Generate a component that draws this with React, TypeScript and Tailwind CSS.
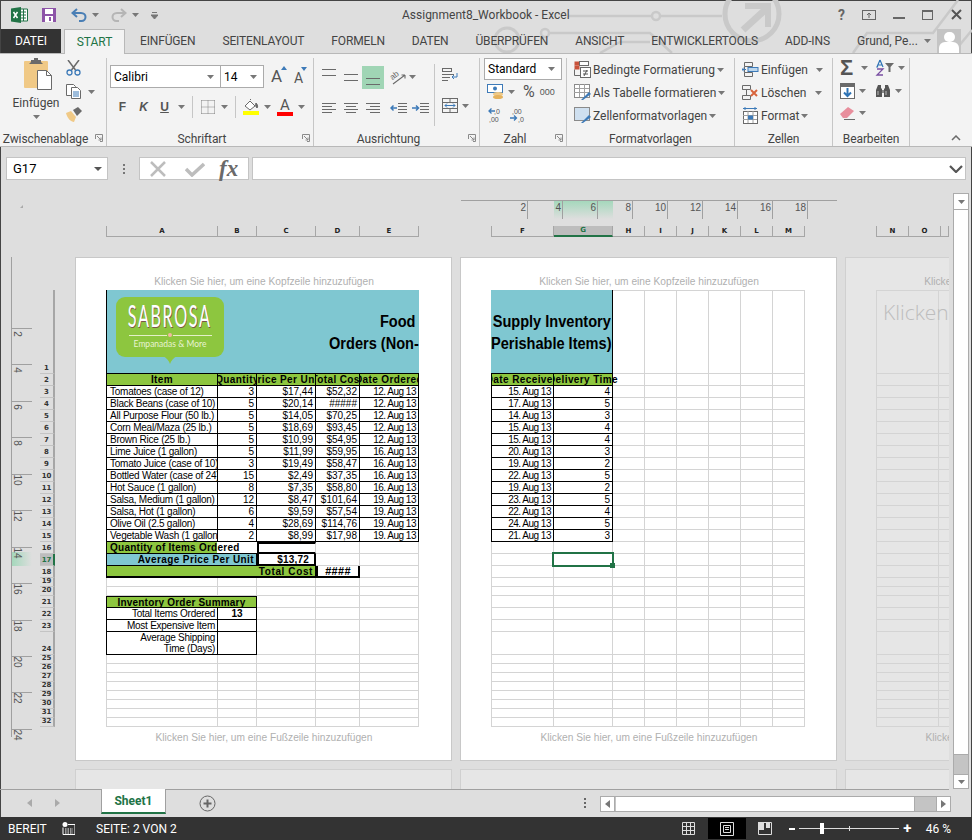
import React from 'react';

const sansUi = "font-['Roboto',sans-serif]";

const Caret = ({ className = '' }: { className?: string }) => (
  <svg width="7" height="4" viewBox="0 0 7 4" className={className}>
    <path d="M0 0h7L3.5 4z" fill="#777" />
  </svg>
);

// ---------- ribbon icons ----------
const Launcher = () => (
  <svg width="8" height="8" viewBox="0 0 8 8" className="shrink-0">
    <path d="M.5 5V.5H7.5V7.5H5" fill="none" stroke="#8a8a8a" />
    <path d="M2 2l4 4M6 3.5V6H3.5" fill="none" stroke="#8a8a8a" />
  </svg>
);

const AlignLines = ({ y }: { y: number[] }) => (
  <svg width="15" height="16" viewBox="0 0 15 16">
    {y.map((v, i) => (
      <path key={i} d={`M0 ${v}.5h14`} stroke="#6a6a6a" />
    ))}
  </svg>
);

const HAlign = ({ d }: { d: string }) => (
  <svg width="15" height="12" viewBox="0 0 15 12">
    <path d={d} stroke="#6a6a6a" fill="none" />
  </svg>
);

const Paste = () => (
  <svg width="30" height="32" viewBox="0 0 30 32">
    <rect x="1" y="3" width="24" height="27" rx="1" fill="#f0c986" />
    <path d="M8 4V2h3V0h4v2h3v2l2 2H6z" fill="#6a6a6a" />
    <path d="M14.500 12.500h9l5 5v14h-14z" fill="#fff" stroke="#6a6a6a" />
    <path d="M23.500 12.500v5h5" fill="none" stroke="#6a6a6a" />
  </svg>
);

const Scissors = () => (
  <svg width="15" height="16" viewBox="0 0 15 16">
    <path d="M2 0l7.500 10M13 0L5.500 10" stroke="#6a6a6a" strokeWidth="1.500" fill="none" />
    <circle cx="3.500" cy="12.500" r="2.500" fill="none" stroke="#3d7ab8" strokeWidth="1.300" />
    <circle cx="11.500" cy="12.500" r="2.500" fill="none" stroke="#3d7ab8" strokeWidth="1.300" />
  </svg>
);

const Copy = () => (
  <svg width="16" height="15" viewBox="0 0 16 15">
    <path d="M.5.5h7l2 2v9h-9z" fill="#fff" stroke="#6a6a6a" />
    <path d="M5.500 3.500h6l3 3v8h-9z" fill="#fff" stroke="#6a6a6a" />
    <path d="M7 8h6M7 10h6M7 12h6" stroke="#3d7ab8" />
  </svg>
);

const Painter = () => (
  <svg width="17" height="15" viewBox="0 0 17 15">
    <path d="M0 6l5-2 5 6-2 5C5 15 1 11 0 6z" fill="#f0c986" />
    <path d="M7 3l5-3 4 4-5 5z" fill="#6a6a6a" />
  </svg>
);

const Borders = () => (
  <svg width="14" height="14" viewBox="0 0 14 14">
    <path d="M.5.5h13M.5 7h13M.5 13.500h13M.5.5v13M7 .5v13M13.500.5v13" stroke="#808080" strokeDasharray="1 1" fill="none" />
  </svg>
);

const FillColor = () => (
  <svg width="16" height="16" viewBox="0 0 16 16">
    <path d="M2 7l5-5 5 5-5 4z" fill="#fff" stroke="#6a6a6a" />
    <path d="M7 1l1-1M13 4c2 2 2 4 1 5-1-1-2-3-1-5z" stroke="#6a6a6a" fill="#6a6a6a" />
    <rect y="12" width="16" height="4" fill="#ffff00" />
  </svg>
);

const Orient = () => (
  <svg width="16" height="16" viewBox="0 0 16 16">
    <text x="1" y="9" fontSize="8" fill="#666" transform="rotate(-40 5 8)" fontFamily="Liberation Sans">
      ab
    </text>
    <path d="M3 15L15 6M15 6h-3.500M15 6v3.500" stroke="#6a6a6a" fill="none" strokeWidth="1.100" />
  </svg>
);

const Wrap = () => (
  <svg width="16" height="15" viewBox="0 0 16 15">
    <rect x=".5" y=".5" width="9" height="3" fill="none" stroke="#6a6a6a" />
    <path d="M0 6.500h12M0 9.500h8M0 12.500h6" stroke="#6a6a6a" />
    <path d="M15 5v4h-5M12 7l-2 2 2 2" stroke="#3d7ab8" fill="none" />
  </svg>
);

const Merge = () => (
  <svg width="16" height="15" viewBox="0 0 16 15">
    <rect x=".5" y=".5" width="15" height="14" fill="none" stroke="#6a6a6a" />
    <path d="M0 4.500h16M0 10.500h16M8 .5v4M8 10.500v4" stroke="#6a6a6a" />
    <path d="M3 7.500h10M5 5.500l-2 2 2 2M11 5.500l2 2-2 2" stroke="#3d7ab8" fill="none" />
  </svg>
);

const IndentIcon = ({ flip = false }: { flip?: boolean }) => (
  <svg width="17" height="12" viewBox="0 0 17 12">
    <path d="M8 1.500h9M8 4.500h9M8 7.500h9M8 10.500h9" stroke="#6a6a6a" />
    <path
      d={flip ? 'M0 6h6M4 3.500L6.500 6 4 8.500' : 'M7 6H1M3.500 3.500L1 6l2.500 2.500'}
      stroke="#3d7ab8"
      strokeWidth="1.500"
      fill="none"
    />
  </svg>
);

const Currency = () => (
  <svg width="17" height="16" viewBox="0 0 17 16">
    <rect x=".5" y=".5" width="15" height="8" fill="#fff" stroke="#3d7ab8" />
    <circle cx="8" cy="4.500" r="2" fill="#3d7ab8" />
    <ellipse cx="11" cy="10" rx="5" ry="2" fill="#f0c986" />
    <ellipse cx="11" cy="13" rx="5" ry="2" fill="#e5b25d" />
  </svg>
);

const Decimal = ({ flip = false }: { flip?: boolean }) => (
  <svg width="15" height="16" viewBox="0 0 15 16">
    <path
      d={flip ? 'M0 11h6M4 8.500L6.500 11 4 13.500' : 'M7 4H1M3.500 1.500L1 4l2.500 2.500'}
      stroke="#3d7ab8"
      strokeWidth="1.300"
      fill="none"
    />
    <text x={flip ? '2' : '6'} y="6.500" fontSize="7" fill="#555" fontFamily="Liberation Sans">
      {flip ? ',00' : ',0'}
    </text>
    <text x={flip ? '8' : '1'} y="14.500" fontSize="7" fill="#555" fontFamily="Liberation Sans">
      {flip ? ',0' : ',00'}
    </text>
  </svg>
);

const CondFormat = () => (
  <svg width="17" height="17" viewBox="0 0 17 17">
    <rect x=".5" y=".5" width="5" height="4" fill="#c8523a" />
    <rect x="5.500" y=".5" width="9" height="4" fill="#fff" stroke="#6a6a6a" />
    <rect x=".5" y="4.500" width="5" height="4" fill="#c8523a" />
    <path d="M.5 8.500v6h7" fill="none" stroke="#6a6a6a" />
    <rect x="6.500" y="6.500" width="10" height="10" fill="#fff" stroke="#6a6a6a" />
    <path d="M9 10h5M9 13h5M10 15l3-6" stroke="#555" />
  </svg>
);

const TableFormat = ({ lines = true }: { lines?: boolean }) => (
  <svg width="17" height="17" viewBox="0 0 17 17">
    <rect x=".5" y=".5" width="15" height="13" fill={lines ? '#fff' : '#cfe0f0'} stroke="#8a8a8a" />
    {lines && <path d="M0 4.500h15M0 8.500h15M5.500 0v13M10.500 0v13" stroke="#a0a0a0" />}
    <path d="M7 16l8-8 2 2-8 6z" fill="#3d7ab8" />
  </svg>
);

const CellInsert = () => (
  <svg width="17" height="16" viewBox="0 0 17 16">
    <path d="M2.500.5h8v4h-8zM2.500 10.500h8v4h-8zM2.500 4.500v6" fill="none" stroke="#6a6a6a" />
    <path d="M0 7.500h4M2 5.500l-2 2 2 2" stroke="#3d7ab8" fill="none" />
    <rect x="6" y="5.500" width="10" height="4" fill="#bcd6ec" stroke="#3d7ab8" />
  </svg>
);

const CellDelete = () => (
  <svg width="17" height="16" viewBox="0 0 17 16">
    <path d="M.5.5h8v4h-8zM.5 10.500h8v4h-8zM.5 4.500h4v6" fill="none" stroke="#6a6a6a" />
    <path d="M9 5l6 6M15 5l-6 6" stroke="#d8643c" strokeWidth="2" />
  </svg>
);

const CellFormat = () => (
  <svg width="17" height="17" viewBox="0 0 17 17">
    <path d="M1 1.500h14M3 0v3M13 0v3" stroke="#3d7ab8" />
    <rect x="1.500" y="4.500" width="14" height="12" fill="#fff" stroke="#6a6a6a" />
    <path d="M1 8.500h14M1 12.500h14M6 4v12M11 4v12" stroke="#a0a0a0" />
    <rect x="6" y="8.500" width="5" height="4" fill="#3d7ab8" />
  </svg>
);

const FillDown = () => (
  <svg width="15" height="16" viewBox="0 0 15 16">
    <rect x=".5" y=".5" width="14" height="15" fill="#fff" stroke="#6a6a6a" />
    <rect x="1" y="1" width="13" height="3" fill="#6a6a6a" />
    <path d="M7.500 5v8M4 9.500l3.500 3.500L11 9.500" stroke="#2f74b5" strokeWidth="2" fill="none" />
  </svg>
);

const Binoculars = () => (
  <svg width="16" height="14" viewBox="0 0 16 14">
    <path d="M3 1h3v3l1 1v8H1V6zM13 1h-3v3L9 5v8h6V6z" fill="#555" />
    <path d="M7 6h2v3H7z" fill="#888" />
    <path d="M3 7v4M11 7v4" stroke="#bbb" />
  </svg>
);

const Eraser = () => (
  <svg width="15" height="14" viewBox="0 0 15 14">
    <path d="M0 8l8-7 6 4-7 7H3z" fill="#e88e9c" />
    <path d="M4 13.500h11" stroke="#6a6a6a" />
  </svg>
);

const SortIcon = () => (
  <svg width="20" height="16" viewBox="0 0 20 16" className="overflow-visible">
    <path d="M4 0L1 7h1.200M4 0l3 7M2.500 5h3" stroke="#2f74b5" fill="none" strokeWidth="1.200" />
    <path d="M1 9h6l-6 6h6" stroke="#7a4fa3" fill="none" strokeWidth="1.300" />
    <path d="M9 3h9l-3.500 4v5h-2V7z" fill="#6a6a6a" />
  </svg>
);

// ---------- title bar ----------
const ExcelLogo = () => (
  <svg width="17" height="16" viewBox="0 0 17 16">
    <path d="M7 2h9.500v12H7z" fill="#fff" stroke="#217346" />
    <path d="M10 5h5M10 8h5M10 11h5M12.500 2v12" stroke="#217346" />
    <path d="M0 1.500L10 0v16L0 14.500z" fill="#217346" />
    <path d="M2.500 5l4 6M6.500 5l-4 6" stroke="#fff" strokeWidth="1.500" />
  </svg>
);

const SaveIcon = () => (
  <svg width="14" height="14" viewBox="0 0 14 14">
    <rect width="14" height="14" fill="#8d54a8" />
    <rect x="3" y="1" width="8" height="5" fill="#fff" />
    <rect x="3" y="8" width="8" height="6" fill="#fff" />
    <rect x="7" y="9" width="2" height="4" fill="#8d54a8" />
  </svg>
);

const UndoIcon = ({ color }: { color: string }) => (
  <svg width="16" height="14" viewBox="0 0 16 14">
    <path d="M6 1L1.500 5 6 9" stroke={color} strokeWidth="2" fill="none" />
    <path d="M2 5h8c3 0 4.500 2 4.500 4s-1.500 4-4 4H8" stroke={color} strokeWidth="2" fill="none" />
  </svg>
);

const Watermark = () => (
  <svg
    width="482"
    height="54"
    viewBox="0 0 482 54"
    className="absolute right-0 top-0 pointer-events-none"
    fill="none"
    stroke="#c9c9c9"
    strokeWidth="2.500"
  >
    <circle cx="262" cy="14" r="27" strokeWidth="5" />
    <path d="M253 30L276 9" strokeWidth="7" />
    <path d="M255 6h23v21" strokeWidth="6" />
    <path d="M78 16h154" />
    <circle cx="166" cy="16" r="4" fill="#dedede" />
    <path d="M59 33h101l22 20" />
    <circle cx="55" cy="33" r="4" fill="#dedede" />
    <circle cx="17" cy="40" r="12" strokeWidth="3" />
    <path d="M110 53l20-11h30" />
    <path d="M363 53l14-20h66l19-25 6-8M463 53l19-23" />
  </svg>
);

// ---------- ribbon ----------
const Group = ({
  label,
  width,
  launcher,
  children,
}: {
  label: string;
  width: number;
  launcher?: boolean;
  children: React.ReactNode;
}) => (
  <div className="flex flex-col border-r border-[#c6c6c6] shrink-0" style={{ width }}>
    <div className="h-[74px]">{children}</div>
    <div className={`h-[10px] flex items-center relative text-[12px] text-[#444] ${launcher ? 'pr-[16px]' : ''}`}>
      <span className="flex-1 text-center leading-[14px] whitespace-nowrap translate-y-[2px] tracking-[-0.1px]">{label}</span>
      {launcher && (
        <span className="absolute right-[3px] top-[2px]">
          <Launcher />
        </span>
      )}
    </div>
  </div>
);

const StyleRow = ({ icon, label, caretGap = 2 }: { icon: React.ReactNode; label: string; caretGap?: number }) => (
  <div className="flex items-center h-[23px]">
    <span className="w-[19px] shrink-0 flex">{icon}</span>
    <span className="text-[12px] text-[#444] whitespace-nowrap">{label}</span>
    <span className="flex" style={{ marginLeft: caretGap }}>
      <Caret />
    </span>
  </div>
);

const Ribbon = () => (
  <div className="h-[93px] bg-[#f3f3f3] border-b border-[#b8b8b8] flex pt-[4px] pl-[1px] relative">
    <Group label="Zwischenablage" width={106} launcher>
      <div className="flex pl-[10px]">
        <div className="w-[50px] flex flex-col items-center">
          <span className="flex ml-[4px]">
            <Paste />
          </span>
          <span className="text-[12px] text-[#444] mt-[5px] leading-[16px]">Einfügen</span>
          <Caret className="mt-[4px]" />
        </div>
        <div className="flex flex-col ml-[5px] gap-[8px] pt-[2px]">
          <span className="flex">
            <Scissors />
          </span>
          <span className="flex items-center gap-[3px]">
            <Copy />
            <Caret className="ml-[3px]" />
          </span>
          <span className="flex">
            <Painter />
          </span>
        </div>
      </div>
    </Group>

    <Group label="Schriftart" width={207} launcher>
      <div className="flex items-center mt-[7px] pl-[3px]">
        <div className="w-[111px] h-[23px] bg-white border border-[#ababab] flex items-center justify-between px-[3px] text-[12px] text-black">
          Calibri
          <Caret className="mr-[3px]" />
        </div>
        <div className="w-[43px] h-[23px] bg-white border border-l-0 border-[#ababab] flex items-center justify-between px-[3px] text-[12px] text-black">
          14
          <Caret className="mr-[3px]" />
        </div>
        <div className="relative ml-[7px] text-[17px] text-[#555] leading-none w-[16px]">
          A
          <span className="absolute right-0 top-[-2px] w-0 h-0 border-x-[3px] border-x-transparent border-b-[4px] border-b-[#3d7ab8]" />
        </div>
        <div className="relative ml-[7px] text-[14px] text-[#555] leading-none w-[12px] mt-[2px]">
          A
          <span className="absolute right-[-1px] top-[-4px] w-0 h-0 border-x-[3px] border-x-transparent border-t-[4px] border-t-[#3d7ab8]" />
        </div>
      </div>
      <div className="flex items-center mt-[8px] pl-[5px] h-[22px] text-[12px] text-[#555]">
        <span className="w-[21px] font-bold font-['Liberation_Sans',sans-serif] text-center">F</span>
        <span className="w-[21px] font-bold italic font-['Liberation_Sans',sans-serif] text-center">K</span>
        <span className="w-[21px] font-bold underline font-['Liberation_Sans',sans-serif] text-center">U</span>
        <Caret className="ml-[3px]" />
        <span className="h-[22px] border-l border-[#c6c6c6] ml-[7px]" />
        <span className="ml-[8px] flex">
          <Borders />
        </span>
        <Caret className="ml-[6px]" />
        <span className="h-[22px] border-l border-[#c6c6c6] ml-[7px]" />
        <span className="ml-[7px] flex">
          <FillColor />
        </span>
        <Caret className="ml-[5px]" />
        <span className="ml-[6px] relative flex flex-col items-center w-[16px] text-[15px] leading-[14px]">
          A<span className="w-[16px] h-[4px] bg-[#ff0000]" />
        </span>
        <Caret className="ml-[5px]" />
      </div>
    </Group>

    <Group label="Ausrichtung" width={166} launcher>
      <div className="flex h-full">
        <div className="w-[121px] pl-[8px] border-r border-[#c6c6c6] h-[62px] mt-[6px]">
          <div className="flex items-center h-[24px] mt-[1px]">
            <span className="w-[22px] flex">
              <AlignLines y={[0, 6]} />
            </span>
            <span className="w-[18px] flex">
              <AlignLines y={[5, 11]} />
            </span>
            <span className="w-[22px] h-[23px] bg-[#a0d5b5] flex items-center justify-center">
              <AlignLines y={[9, 15]} />
            </span>
            <span className="ml-[6px] flex">
              <Orient />
            </span>
            <Caret className="ml-[3px]" />
          </div>
          <div className="flex items-center h-[22px] mt-[8px]">
            <span className="w-[22px] flex">
              <HAlign d="M0 1.500h14M0 4.500h10M0 7.500h14M0 10.500h10" />
            </span>
            <span className="w-[22px] flex">
              <HAlign d="M0 1.500h14M2 4.500h10M0 7.500h14M2 10.500h10" />
            </span>
            <span className="w-[24px] flex">
              <HAlign d="M0 1.500h14M4 4.500h10M0 7.500h14M4 10.500h10" />
            </span>
            <span className="w-[22px] flex">
              <IndentIcon />
            </span>
            <span className="flex">
              <IndentIcon flip />
            </span>
          </div>
        </div>
        <div className="pl-[7px] pt-[10px] flex flex-col gap-[15px]">
          <span className="flex">
            <Wrap />
          </span>
          <span className="flex items-center gap-[4px]">
            <Merge />
            <Caret />
          </span>
        </div>
      </div>
    </Group>

    <Group label="Zahl" width={87} launcher>
      <div className="pl-[4px]">
        <div className="w-[78px] h-[22px] bg-white border border-[#ababab] flex items-center justify-between px-[3px] text-[12px] text-black">
          Standard
          <Caret className="mr-[3px]" />
        </div>
        <div className="flex items-center h-[18px] mt-[3px] pl-[3px]">
          <Currency />
          <Caret className="ml-[4px]" />
          <span className="ml-[8px] text-[16px] text-[#555] leading-none">%</span>
          <span className="ml-[5px] text-[9px] text-[#555] leading-none font-['Liberation_Sans',sans-serif]">000</span>
        </div>
        <div className="flex items-center h-[16px] mt-[6px] pl-[4px] gap-[7px]">
          <Decimal />
          <Decimal flip />
        </div>
      </div>
    </Group>

    <Group label="Formatvorlagen" width={168}>
      <div className="pl-[7px]">
        <StyleRow icon={<CondFormat />} label="Bedingte Formatierung" />
        <StyleRow icon={<TableFormat />} label="Als Tabelle formatieren" />
        <StyleRow icon={<TableFormat lines={false} />} label="Zellenformatvorlagen" />
      </div>
    </Group>

    <Group label="Zellen" width={98}>
      <div className="pl-[7px]">
        <StyleRow icon={<CellInsert />} label="Einfügen" caretGap={8} />
        <StyleRow icon={<CellDelete />} label="Löschen" caretGap={9} />
        <StyleRow icon={<CellFormat />} label="Format" caretGap={2} />
      </div>
    </Group>

    <Group label="Bearbeiten" width={77}>
      <div className="pl-[7px] pt-[1px] flex flex-col gap-[7px]">
        <div className="flex items-center h-[17px]">
          <span className="w-[17px] text-[22px] font-bold leading-[17px] text-[#555] font-['Liberation_Sans',sans-serif]">Σ</span>
          <Caret className="ml-[4px]" />
          <span className="ml-[8px] flex">
            <SortIcon />
          </span>
          <Caret className="ml-[2px]" />
        </div>
        <div className="flex items-center h-[16px]">
          <FillDown />
          <Caret className="ml-[4px]" />
          <span className="ml-[9px] flex">
            <Binoculars />
          </span>
          <Caret className="ml-[4px]" />
        </div>
        <div className="flex items-center h-[14px]">
          <Eraser />
          <Caret className="ml-[4px]" />
        </div>
      </div>
    </Group>

    <svg width="10" height="6" viewBox="0 0 10 6" className="absolute right-[11px] bottom-[5px]">
      <path d="M1 5l4-4 4 4" fill="none" stroke="#6a6a6a" strokeWidth="1.500" />
    </svg>
  </div>
);

// ---------- sheet ----------
const Cell = ({ className = '', children }: { className?: string; children?: React.ReactNode }) => (
  <div
    className={`flex items-center min-w-0 whitespace-nowrap overflow-hidden text-[10px] leading-[11px] text-black border-r border-b ${className}`}
  >
    {children}
  </div>
);

const gray = 'border-[#d4d4d4]';
const blk = 'border-black';
const num = 'justify-end pr-[2px]';
const label = 'tracking-[-0.25px]';
const date = 'tracking-[-0.5px]';
const head = 'justify-center font-bold tracking-[0.4px] bg-[#8dc63f] border-black';

const rowTemplate = 'grid-rows-[84px_repeat(17,12px)_9px_9px_12px_12px_12px_23px_repeat(8,9px)]';

const items: string[][] = [
  ['Tomatoes (case of 12)', '3', '$17,44', '$52,32', '12. Aug 13'],
  ['Black Beans (case of 10)', '5', '$20,14', '#####', '12. Aug 13'],
  ['All Purpose Flour (50 lb.)', '5', '$14,05', '$70,25', '12. Aug 13'],
  ['Corn Meal/Maza (25 lb.)', '5', '$18,69', '$93,45', '12. Aug 13'],
  ['Brown Rice (25 lb.)', '5', '$10,99', '$54,95', '12. Aug 13'],
  ['Lime Juice (1 gallon)', '5', '$11,99', '$59,95', '16. Aug 13'],
  ['Tomato Juice (case of 10)', '3', '$19,49', '$58,47', '16. Aug 13'],
  ['Bottled Water (case of 24)', '15', '$2,49', '$37,35', '16. Aug 13'],
  ['Hot Sauce (1 gallon)', '8', '$7,35', '$58,80', '16. Aug 13'],
  ['Salsa, Medium (1 gallon)', '12', '$8,47', '$101,64', '19. Aug 13'],
  ['Salsa, Hot (1 gallon)', '6', '$9,59', '$57,54', '19. Aug 13'],
  ['Olive Oil (2.5 gallon)', '4', '$28,69', '$114,76', '19. Aug 13'],
  ['Vegetable Wash (1 gallon)', '2', '$8,99', '$17,98', '19. Aug 13'],
];

const received: [string, string][] = [
  ['15. Aug 13', '4'],
  ['17. Aug 13', '5'],
  ['14. Aug 13', '3'],
  ['15. Aug 13', '4'],
  ['15. Aug 13', '4'],
  ['20. Aug 13', '3'],
  ['19. Aug 13', '2'],
  ['22. Aug 13', '5'],
  ['19. Aug 13', '2'],
  ['23. Aug 13', '5'],
  ['22. Aug 13', '4'],
  ['24. Aug 13', '5'],
  ['21. Aug 13', '3'],
];

const range = (n: number) => Array.from({ length: n }, (_, i) => i);

const Logo = () => (
  <div className="absolute left-[9px] top-[7px] w-[108px] h-[60px] rounded-[9px] bg-[#8dc63f] flex flex-col items-center text-white">
    <span className="block h-[30px] mt-[3px] text-[30px] leading-[30px] font-normal font-['Lato',sans-serif] tracking-[3px] scale-x-[0.54] [text-shadow:1px_1px_0_#7a5648]">
      SABROSA
    </span>
    <div className="w-[83px] mt-[3px] flex items-center">
      <span className="flex-1 h-px bg-[#e4f0c8]" />
      <span className="w-[4px] h-[4px] rounded-full bg-[#f2b9a0] mx-[1px]" />
      <span className="flex-1 h-px bg-[#e4f0c8]" />
    </div>
    <span className="text-[8.5px] leading-[10px] mt-[2px] font-['Lato',sans-serif] text-[#e8f3d2]">Empanadas &amp; More</span>
    <svg width="14" height="8" viewBox="0 0 14 8" className="absolute left-[47px] top-[59px]">
      <path d="M0 0h14C10 2 8 5 7 8 6 5 4 2 0 0z" fill="#8dc63f" />
    </svg>
  </div>
);

const PageOneGrid = () => (
  <div className={`grid grid-cols-[112px_39px_59px_44px_59px] ${rowTemplate}`}>
    <div className="col-span-5 relative bg-[#7fc7d1] border-l border-b border-black overflow-hidden whitespace-nowrap">
      <Logo />
      <div className="absolute right-0 top-[21px] w-[230px] h-[44px] flex flex-col text-[16px] leading-[22px] font-bold text-black font-['Liberation_Sans',sans-serif] overflow-hidden">
        <span className="self-end pr-[4px] scale-x-[0.91] origin-right">Food</span>
        <span className="pl-[140px] scale-x-[0.91] origin-[140px_50%]">Orders (Non-</span>
      </div>
    </div>
    <Cell className={`${head} border-l`}>Item</Cell>
    <Cell className={head}>Quantity</Cell>
    <Cell className={head}>Price Per Unit</Cell>
    <Cell className={head}>Total Cost</Cell>
    <Cell className={head}>Date Ordered</Cell>
    {items.map((r) => (
      <React.Fragment key={r[0]}>
        <Cell className={`${blk} border-l pl-[3px] ${label}`}>{r[0]}</Cell>
        <Cell className={`${blk} ${num}`}>{r[1]}</Cell>
        <Cell className={`${blk} ${num}`}>{r[2]}</Cell>
        <Cell className={`${blk} ${num}`}>{r[3]}</Cell>
        <Cell className={`${blk} ${num} ${date}`}>{r[4]}</Cell>
      </React.Fragment>
    ))}
    {/* totals */}
    <Cell className={`${blk} col-span-2 border-l pl-[3px] font-bold tracking-[0.25px] overflow-visible bg-[linear-gradient(to_right,#8dc63f_110px,#fff_110px)] border-r-0`}>
      Quantity of Items Ordered
    </Cell>
    <Cell className={`${gray} border-l-2 border-t-2 border-b-2 border-l-black border-t-black border-b-black`} />
    <Cell className={gray} />
    <Cell className={gray} />
    <Cell className={`${blk} col-span-2 border-l justify-end pr-[2px] bg-[#7fc7d1] font-bold tracking-[0.4px]`}>
      Average Price Per Unit
    </Cell>
    <Cell className={`${blk} border-l-2 border-r-2 border-b-2 justify-end pr-[5px] font-bold tracking-[0.2px]`}>$13,72</Cell>
    <Cell className={gray} />
    <Cell className={gray} />
    <Cell className={`${blk} col-span-3 border-l border-b-2 justify-end pr-[2px] bg-[#8dc63f] font-bold tracking-[0.6px]`}>
      Total Cost
    </Cell>
    <Cell className={`${blk} border-l-2 border-r-2 border-b-2 justify-center text-[11px] font-bold tracking-[0.3px]`}>####</Cell>
    <Cell className={gray} />
    {range(10).map((i) => (
      <Cell key={i} className={`${gray} ${i % 5 === 0 ? 'border-l' : ''}`} />
    ))}
    {/* summary */}
    <Cell className={`${blk} col-span-2 border-l border-t justify-center bg-[#8dc63f] font-bold tracking-[0.2px]`}>
      Inventory Order Summary
    </Cell>
    <Cell className={gray} />
    <Cell className={gray} />
    <Cell className={gray} />
    <Cell className={`${blk} border-l ${num} ${label}`}>Total Items Ordered</Cell>
    <Cell className={`${blk} justify-center font-bold`}>13</Cell>
    <Cell className={gray} />
    <Cell className={gray} />
    <Cell className={gray} />
    <Cell className={`${blk} border-l ${num} ${label}`}>Most Expensive Item</Cell>
    <Cell className={blk} />
    <Cell className={gray} />
    <Cell className={gray} />
    <Cell className={gray} />
    <Cell className={`${blk} border-l ${num} ${label} whitespace-normal text-right`}>
      Average Shipping
      <br />
      Time (Days)
    </Cell>
    <Cell className={blk} />
    <Cell className={gray} />
    <Cell className={gray} />
    <Cell className={gray} />
    {range(40).map((i) => (
      <Cell key={i} className={`${gray} ${i % 5 === 0 ? 'border-l' : ''}`} />
    ))}
  </div>
);

const plainCols = 'grid-cols-[63px_59px_32px_32px_32px_32px_32px_32px]';

const TailCells = ({ count, from = 0 }: { count: number; from?: number }) => (
  <>
    {range(count).map((i) => (
      <Cell key={i} className={`${gray} ${(i + from) % 8 === 0 ? 'border-l' : ''}`} />
    ))}
  </>
);

const PageTwoGrid = () => (
  <div className={`grid ${plainCols} ${rowTemplate}`}>
    <div className="col-span-2 bg-[#7fc7d1] border-b border-r border-black flex flex-col pt-[21px] items-end pr-[1px] text-[16px] leading-[22px] font-bold text-black font-['Liberation_Sans',sans-serif] whitespace-nowrap">
      <span className="scale-x-[0.91] origin-right">Supply Inventory</span>
      <span className="scale-x-[0.91] origin-right">Perishable Items)</span>
    </div>
    {range(6).map((i) => (
      <Cell key={i} className={`${gray} border-t`} />
    ))}
    <Cell className={`${head} relative z-10 border-l`}>Date Received</Cell>
    <Cell className={`${head} overflow-visible`}>Delivery Time</Cell>
    {range(6).map((i) => (
      <Cell key={i} className={gray} />
    ))}
    {received.map((r, n) => (
      <React.Fragment key={n}>
        <Cell className={`${blk} border-l ${num} ${date}`}>{r[0]}</Cell>
        <Cell className={`${blk} ${num}`}>{r[1]}</Cell>
        {range(6).map((i) => (
          <Cell key={i} className={gray} />
        ))}
      </React.Fragment>
    ))}
    <TailCells count={8} />
    <Cell className={`${gray} border-l`} />
    <div className="relative border-r border-b border-[#d4d4d4]">
      <div className="absolute -left-[2px] -top-[2px] -right-[2px] -bottom-[2px] border-2 border-[#217346] z-10">
        <span className="absolute -right-[3px] -bottom-[3px] w-[5px] h-[5px] bg-[#217346]" />
      </div>
    </div>
    <TailCells count={6} from={2} />
    <TailCells count={8 * 15} />
  </div>
);

const PageThreeGrid = () => (
  <div className={`grid ${plainCols} ${rowTemplate} relative`}>
    <div className="absolute left-[7px] top-[9px] text-[21px] leading-[26px] text-[#bdbdbd] font-['Open_Sans',sans-serif] font-light">
      Klicken
    </div>
    {range(8 * 32).map((i) => (
      <Cell key={i} className={`${gray} ${i < 8 ? 'border-t' : ''} ${i % 8 === 0 ? 'border-l' : ''}`} />
    ))}
  </div>
);

const Page = ({ children, clipped = false }: { children: React.ReactNode; clipped?: boolean }) => (
  <div
    className={`w-[377px] h-[504px] shrink-0 border ${
      clipped ? 'bg-[#e6e6e6] border-[#d0d0d0]' : 'bg-white border-[#c8c8c8]'
    } flex flex-col pl-[30px] font-['Liberation_Sans',sans-serif]`}
  >
    <div className="h-[32px] w-[316px] text-center text-[10.2px] leading-[12px] pt-[18px] text-[#b0b0b0] whitespace-nowrap">
      Klicken Sie hier, um eine Kopfzeile hinzuzufügen
    </div>
    {children}
    <div className="w-[316px] text-center text-[10.2px] leading-[12px] pt-[5px] text-[#b0b0b0] whitespace-nowrap">
      Klicken Sie hier, um eine Fußzeile hinzuzufügen
    </div>
  </div>
);

const rowHeights = [84, ...range(17).map(() => 12), 9, 9, 12, 12, 12, 23, ...range(8).map(() => 9)];

const RowHeaders = () => (
  <div className="w-[15px] shrink-0 pt-[33px] flex flex-col font-['DejaVu_Sans',sans-serif]">
    {rowHeights.map((h, i) => {
      const active = i === 16;
      return (
        <div
          key={i}
          className={`flex items-end justify-center border-r-2 text-[7px] leading-[10px] font-bold ${
            active ? 'bg-[#bdbdbd] text-[#217346] border-r-[#217346]' : 'text-[#333] border-r-[#a6a6a6]'
          } border-b border-b-[#c4c4c4]`}
          style={{ height: h }}
        >
          {i + 1}
        </div>
      );
    })}
  </div>
);

const VRuler = () => (
  <div className="w-[29px] shrink-0 border-l border-[#a0a0a0] h-[480px] relative">
    <div className="absolute left-0 top-[295px] w-[20px] h-[14px] bg-[linear-gradient(to_right,#a5d8bc,transparent)]" />
    <div className="h-[71px]" />
    {range(12).map((i) => (
      <div key={i} className="h-[36.45px] w-[20px] border-t border-[#a0a0a0] relative">
        <span className="absolute left-[-1px] top-[0px] text-[10px] leading-[10px] text-[#555] rotate-90 origin-center font-['Liberation_Sans',sans-serif] w-[12px] text-center">
          {(i + 1) * 2}
        </span>
      </div>
    ))}
  </div>
);

const HRuler = () => (
  <div className="ml-[461px] w-[376px] h-[18px] border-t border-[#a0a0a0] flex relative font-['Liberation_Sans',sans-serif]">
    <div className="absolute left-[93px] top-0 w-[59px] h-[18px] bg-[linear-gradient(to_bottom,#a5d8bc,transparent)]" />
    <div className="w-[32px] h-[18px]" />
    {range(9).map((i) => (
      <div
        key={i}
        className="w-[35px] h-[18px] relative border-r border-[#a0a0a0] text-right pr-[1px] text-[10px] leading-[13px] text-[#555]"
      >
        {(i + 1) * 2}
      </div>
    ))}
  </div>
);

const ColHead = ({ name, width, active = false }: { name: string; width: number; active?: boolean }) => (
  <div
    className={`h-[11px] shrink-0 flex items-center justify-center text-[7px] leading-none font-bold border-r ${
      active ? 'bg-[#bdbdbd] text-[#217346] border-b-2 border-b-[#217346] border-r-[#a6a6a6]' : 'border-r-[#a6a6a6] text-[#222] border-b border-b-[#a6a6a6]'
    }`}
    style={{ width }}
  >
    {name}
  </div>
);

const ColumnHeaders = () => (
  <div className="flex mt-[8px] h-[11px] font-['DejaVu_Sans',sans-serif]">
    <div className="w-[106px] shrink-0" />
    <div className="flex border-l border-[#a6a6a6]">
      <ColHead name="A" width={111} />
      <ColHead name="B" width={39} />
      <ColHead name="C" width={59} />
      <ColHead name="D" width={44} />
      <ColHead name="E" width={59} />
    </div>
    <div className="w-[72px] shrink-0" />
    <div className="flex border-l border-[#a6a6a6]">
      <ColHead name="F" width={62} />
      <ColHead name="G" width={59} active />
      <ColHead name="H" width={32} />
      <ColHead name="I" width={32} />
      <ColHead name="J" width={32} />
      <ColHead name="K" width={32} />
      <ColHead name="L" width={32} />
      <ColHead name="M" width={32} />
    </div>
    <div className="w-[71px] shrink-0" />
    <div className="flex border-l border-[#a6a6a6]">
      <ColHead name="N" width={32} />
      <ColHead name="O" width={32} />
      <ColHead name="" width={8} />
    </div>
  </div>
);

const VScrollbar = () => (
  <div className="w-[16px] ml-[4px] mt-[3px] h-[596px] border border-[#ababab] bg-[#c4c4c4] flex flex-col">
    <div className="h-[16px] bg-white border-b border-[#ababab] flex items-center justify-center">
      <Caret />
    </div>
    <div className="h-[545px] bg-white border-b border-[#ababab]" />
    <div className="flex-1" />
    <div className="h-[14px] bg-white border-t border-[#ababab] flex items-center justify-center">
      <Caret />
    </div>
  </div>
);

const Workspace = () => (
  <div className="h-[599px] flex overflow-hidden relative">
    <span className="absolute left-[20px] top-[15px] w-0 h-0 border-l-[3px] border-l-transparent border-b-[3px] border-b-[#aaa]" />
    <div className="w-[949px] shrink-0 overflow-hidden pt-[10px]">
      <HRuler />
      <ColumnHeaders />
      <div className="flex pl-[11px] mt-[20px]">
        <VRuler />
        <RowHeaders />
        <div className="pl-[20px] flex flex-col gap-[8px]">
          <div className="flex gap-[8px]">
            <Page>
              <PageOneGrid />
            </Page>
            <Page>
              <PageTwoGrid />
            </Page>
            <Page clipped>
              <PageThreeGrid />
            </Page>
          </div>
          <div className="flex gap-[8px]">
            {range(3).map((i) => (
              <div key={i} className="w-[377px] h-[40px] shrink-0 bg-[#e6e6e6] border border-[#d0d0d0]" />
            ))}
          </div>
        </div>
      </div>
    </div>
    <VScrollbar />
  </div>
);

// ---------- app ----------
const tabs = ['EINFÜGEN', 'SEITENLAYOUT', 'FORMELN', 'DATEN', 'ÜBERPRÜFEN', 'ANSICHT', 'ENTWICKLERTOOLS', 'ADD-INS'];

export default function App() {
  return (
    <div className={`relative w-[972px] h-[840px] overflow-hidden bg-[#dedede] flex flex-col ${sansUi} outline outline-1 -outline-offset-1 outline-[#444]`}>
      {/* TITLE BAR */}
      <div className="relative h-[54px] shrink-0">
        <Watermark />
        <div className="relative h-[29px] flex items-center pl-[11px]">
          <ExcelLogo />
          <span className="ml-[14px] flex">
            <SaveIcon />
          </span>
          <span className="ml-[15px] flex">
            <UndoIcon color="#4a7fb5" />
          </span>
          <Caret className="ml-[5px]" />
          <span className="ml-[12px] flex -scale-x-100">
            <UndoIcon color="#b5b5b5" />
          </span>
          <Caret className="ml-[5px]" />
          <svg width="7" height="8" viewBox="0 0 7 8" className="ml-[12px]">
            <path d="M1 1.500h5M0 4h7L3.500 8z" stroke="#777" fill="#777" strokeWidth="1" />
          </svg>
          <span className="absolute left-[402px] top-[7px] text-[12px] text-[#444] leading-[16px]">
            Assignment8_Workbook - Excel
          </span>
          <div className="absolute left-[832px] top-0 h-[29px] flex items-center text-[#555]">
            <span className="ml-[6px] w-[10px] font-bold text-[14px] leading-none text-[#666]">?</span>
            <svg width="14" height="11" viewBox="0 0 14 11" className="ml-[14px]">
              <rect x=".5" y="1.500" width="13" height="9" fill="none" stroke="#666" />
              <path d="M0 1.500h14M7 9V4M5 6l2-2 2 2" stroke="#666" fill="none" />
            </svg>
            <span className="ml-[17px] w-[12px] h-[2px] bg-[#666] mt-[6px]" />
            <span className="ml-[17px] w-[11px] h-[10px] border border-[#666] border-t-2" />
            <svg width="11" height="11" viewBox="0 0 11 11" className="ml-[18px]">
              <path d="M1 1l9 9M10 1l-9 9" stroke="#555" strokeWidth="2" />
            </svg>
          </div>
        </div>
        {/* TABS */}
        <div className="relative h-[25px] flex items-stretch border-b border-[#b8b8b8] text-[12px] text-[#444]">
          <div className="w-[60px] ml-[1px] bg-[#333] text-white flex items-center justify-center">DATEI</div>
          <div className="w-[61px] ml-[3px] -mb-px bg-[#f3f3f3] border-x border-t border-[#b8b8b8] text-[#217346] flex items-center justify-center z-10">
            START
          </div>
          <div className="flex items-center gap-[27px] ml-[15px] tracking-[-0.15px]">
            {tabs.map((t) => (
              <span key={t} className="whitespace-nowrap">
                {t}
              </span>
            ))}
          </div>
          <div className="absolute left-[857px] top-0 h-[24px] flex items-center">
            Grund, Pe...
            <Caret className="ml-[6px]" />
          </div>
          <div className="absolute left-[937px] top-0 w-[24px] h-[24px] bg-[#c4c4c4] flex flex-col items-center overflow-hidden">
            <span className="w-[11px] h-[11px] mt-[3px] rounded-full bg-white" />
            <span className="w-[20px] h-[12px] rounded-t-[6px] bg-white" />
          </div>
        </div>
      </div>

      <Ribbon />

      {/* FORMULA BAR */}
      <div className="h-[43px] shrink-0 flex items-center pl-[6px] pr-[6px]">
        <div className="w-[102px] h-[23px] bg-white border border-[#c4c4c4] flex items-center justify-between pl-[6px] pr-[5px] text-[13px] text-black">
          G17
          <svg width="8" height="4" viewBox="0 0 8 4">
            <path d="M0 0h8L4 4z" fill="#555" />
          </svg>
        </div>
        <span className="ml-[15px] flex flex-col gap-[2px]">
          <span className="w-[2px] h-[2px] bg-[#777]" />
          <span className="w-[2px] h-[2px] bg-[#777]" />
          <span className="w-[2px] h-[2px] bg-[#777]" />
        </span>
        <div className="ml-[14px] w-[110px] h-[23px] bg-white border border-[#c4c4c4] flex items-center">
          <svg width="18" height="16" viewBox="0 0 18 16" className="ml-[9px]">
            <path d="M2 1l14 14M16 1L2 15" stroke="#bdbdbd" strokeWidth="2.500" />
          </svg>
          <svg width="20" height="16" viewBox="0 0 20 16" className="ml-[18px]">
            <path d="M1 8l6 6L19 3" stroke="#bdbdbd" strokeWidth="3.500" fill="none" />
          </svg>
          <span className="ml-[14px] text-[23px] leading-none italic font-bold text-[#6a6a6a] font-['Liberation_Serif',serif]">fx</span>
        </div>
        <div className="ml-[3px] flex-1 h-[23px] bg-white border border-[#c4c4c4] flex items-center justify-end pr-[2px]">
          <svg width="14" height="8" viewBox="0 0 14 8">
            <path d="M1 1l6 6 6-6" stroke="#555" strokeWidth="2.200" fill="none" />
          </svg>
        </div>
      </div>

      <Workspace />

      {/* SHEET TABS */}
      <div className="h-[28px] shrink-0 flex relative">
        <div className="absolute left-0 top-0 w-[949px] h-px bg-[#a0a0a0]" />
        <div className="flex items-center w-[101px] pl-[27px] gap-[23px]">
          <svg width="5" height="8" viewBox="0 0 5 8">
            <path d="M5 0v8L0 4z" fill="#aaa" />
          </svg>
          <svg width="5" height="8" viewBox="0 0 5 8">
            <path d="M0 0v8l5-4z" fill="#aaa" />
          </svg>
        </div>
        <div className="w-[65px] h-[25px] bg-white border-b-2 border-x border-x-[#a0a0a0] border-b-[#217346] flex items-center justify-center text-[12px] font-bold text-[#217346] z-10">
          Sheet1
        </div>
        <svg width="17" height="17" viewBox="0 0 17 17" className="ml-[33px] mt-[6px]">
          <circle cx="8.500" cy="8.500" r="7.500" fill="none" stroke="#666" />
          <path d="M4.500 8.500h8M8.500 4.500v8" stroke="#666" strokeWidth="2" />
        </svg>
        <span className="ml-[368px] mt-[9px] flex flex-col gap-[2px]">
          <span className="w-[2px] h-[2px] bg-[#666]" />
          <span className="w-[2px] h-[2px] bg-[#666]" />
          <span className="w-[2px] h-[2px] bg-[#666]" />
        </span>
        <div className="ml-[14px] mt-[7px] w-[351px] h-[16px] border border-[#ababab] bg-[#c4c4c4] flex">
          <div className="w-[14px] bg-white border-r border-[#ababab] flex items-center justify-center">
            <svg width="5" height="8" viewBox="0 0 5 8">
              <path d="M5 0v8L0 4z" fill="#777" />
            </svg>
          </div>
          <div className="w-[299px] ml-px bg-white border-r border-[#ababab]" />
          <div className="flex-1" />
          <div className="w-[14px] bg-white border-l border-[#ababab] flex items-center justify-center">
            <svg width="5" height="8" viewBox="0 0 5 8">
              <path d="M0 0v8l5-4z" fill="#777" />
            </svg>
          </div>
        </div>
      </div>

      {/* STATUS BAR */}
      <div className="h-[23px] shrink-0 bg-[#333] flex items-center relative text-[12px] text-white">
        <span className="ml-[8px] w-[54px]">BEREIT</span>
        <svg width="13" height="13" viewBox="0 0 13 13">
          <circle cx="3" cy="2.500" r="2.500" fill="#fff" />
          <path d="M6 2.500h7v10H1v-7" fill="none" stroke="#fff" />
          <path d="M3 7h8M3 9h8M3 11h8" stroke="#fff" strokeDasharray="1.500 1" />
        </svg>
        <span className="ml-[21px]">SEITE: 2 VON 2</span>
        <div className="ml-auto flex items-center mr-[21px]">
          <svg width="13" height="13" viewBox="0 0 13 13">
            <path d="M.5.500h12v12H.5zM.5 4.500h12M.5 8.500h12M4.500.5v12M8.500.5v12" fill="none" stroke="#ddd" />
          </svg>
          <div className="w-[38px] h-[21px] bg-black ml-[13px] flex items-center justify-center">
            <svg width="14" height="14" viewBox="0 0 14 14">
              <path d="M.5.500h13v13H.5zM3.500 3.500h7v7h-7zM5 5.500h4M5 7.500h4" fill="none" stroke="#ddd" />
            </svg>
          </div>
          <svg width="14" height="13" viewBox="0 0 14 13" className="ml-[12px]">
            <path d="M.5.500h13v12H.5z" fill="none" stroke="#ddd" />
            <path d="M0 0h6v8H0zM8 0h4v6H8z" fill="#ddd" />
          </svg>
          <span className="ml-[17px] w-[6px] h-[2px] bg-white" />
          <div className="ml-[4px] w-[100px] h-px bg-[#ddd] relative">
            <span className="absolute left-[21px] -top-[5px] w-[4px] h-[11px] bg-white" />
            <span className="absolute left-[50px] -top-[2px] w-px h-[5px] bg-[#ddd]" />
          </div>
          <span className="ml-[4px] text-[15px] font-bold leading-none w-[9px] flex justify-center">+</span>
          <span className="ml-[14px]">46 %</span>
        </div>
      </div>
    </div>
  );
}
